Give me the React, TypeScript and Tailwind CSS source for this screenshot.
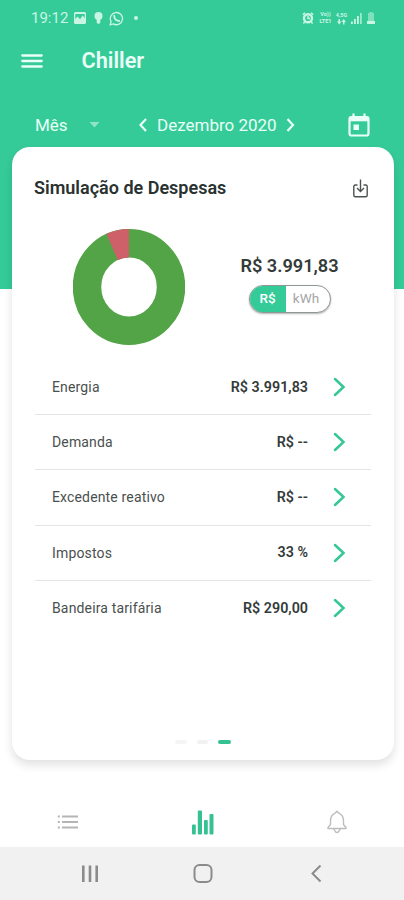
import React from 'react';

const rows = [
  { label: 'Energia', value: 'R$ 3.991,83' },
  { label: 'Demanda', value: 'R$ --' },
  { label: 'Excedente reativo', value: 'R$ --' },
  { label: 'Impostos', value: '33 %' },
  { label: 'Bandeira tarifária', value: 'R$ 290,00' },
];

function StatusBar() {
  return (
    <div className="flex h-9 items-center pl-[31px] pr-[29px] text-[#c9f5e4]">
      <span className="w-[37px] whitespace-nowrap text-[15px] leading-none">19:12</span>
      <svg className="ml-[6px]" width="12" height="12" viewBox="0 0 12 12">
        <path fill="currentColor" fillRule="evenodd" d="M1.5 0h9A1.5 1.5 0 0 1 12 1.500v9a1.500 1.500 0 0 1-1.500 1.500h-9A1.500 1.500 0 0 1 0 10.500v-9A1.500 1.500 0 0 1 1.500 0ZM1.300 2v5l2.300-2.500 2.500 2.700 2.500-3.700 2.100 2.500V2Z" />
      </svg>
      <svg className="ml-[8px]" width="9" height="12" viewBox="0 0 9 12" fill="currentColor">
        <circle cx="4.500" cy="4" r="4" />
        <path d="M2.700 7h3.600v3.500l-1 1.200H3.700l-1-1.200Z" />
      </svg>
      <svg className="ml-[6px]" width="15" height="15" viewBox="0 0 15 15" fill="none" stroke="currentColor">
        <path strokeWidth="1.300" d="m1.200 13.800.9-3.200a6.100 6.100 0 1 1 2.300 2.300Z" />
        <path strokeWidth="1.800" strokeLinecap="round" d="M5.200 4.700c0 3 2 5 5 5.300" />
      </svg>
      <span className="ml-[10px] h-1 w-1 rounded-full bg-current" />
      <div className="ml-auto flex items-center">
        <svg width="12" height="12" viewBox="0 0 12 12" fill="none" stroke="currentColor">
          <circle cx="6" cy="6.300" r="4" strokeWidth="2.400" />
          <path strokeWidth="1.500" d="M6 4v2.500h2M.8 2.800 3 .8M11.200 2.800 9 .8M2.600 10l-1.200 1.500M9.400 10l1.200 1.500" />
        </svg>
        <span className="ml-[4px] flex w-[15px] flex-col items-center text-[5.500px] font-bold leading-[7px]">
          <span>Vo))</span>
          <span>LTE1</span>
        </span>
        <span className="ml-[2px] flex w-[13px] flex-col items-center text-[5.500px] font-bold leading-[7px]">
          <span>4,5G</span>
          <svg width="9" height="6" viewBox="0 0 9 6" fill="currentColor">
            <path d="M1.500 0h1.500v2.500h1.500L2.200 5.500 0 2.500h1.500ZM6 5.500h1.500V3H9L6.700 0 4.500 3H6Z" />
          </svg>
        </span>
        <svg className="ml-[3px]" width="11" height="12" viewBox="0 0 11 12" fill="currentColor">
          <path d="M0 9.500h1.800V12H0ZM3 7h1.800v5H3ZM6 4h1.800v8H6Z" />
          <path d="M9 1h1.800v11H9Z" opacity=".7" />
        </svg>
        <svg className="ml-[5px]" width="8" height="12" viewBox="0 0 8 12" fill="currentColor">
          <path d="M2.500 0h3v1H7v8H1V1h1.500Z" opacity=".5" />
          <path d="M0 9h8v3H0Z" />
        </svg>
      </div>
    </div>
  );
}

function Header() {
  return (
    <header className="h-[289px] bg-[#35cb98] text-[#e9fff7]">
      <StatusBar />
      <div className="flex h-[50px] items-center pl-[21px]">
        <svg width="22" height="16" viewBox="0 0 22 16" stroke="currentColor" strokeWidth="2.300" strokeLinecap="round">
          <path d="M1.300 2.500h19.400M1.300 8h19.400M1.300 13.500h19.400" />
        </svg>
        <h1 className="ml-[38.500px] text-[21.700px] font-semibold leading-none">Chiller</h1>
      </div>
      <div className="mt-[18px] flex h-[42px] items-center pl-[35px] pr-[34px]">
        <span className="w-[33px] text-[17px] leading-none">Mês</span>
        <svg className="ml-[21px]" width="11" height="6" viewBox="0 0 11 6" fill="#8fe5c6">
          <path d="M.5 0h10l-5 5.500Z" />
        </svg>
        <svg className="ml-[38px]" width="9" height="14" viewBox="0 0 9 14" fill="none" stroke="currentColor" strokeWidth="2.200">
          <path d="M8 1 2.500 7 8 13" />
        </svg>
        <span className="ml-[10px] w-[121px] whitespace-nowrap text-[17px] leading-none">Dezembro 2020</span>
        <svg className="ml-[8px]" width="9" height="14" viewBox="0 0 9 14" fill="none" stroke="currentColor" strokeWidth="2.200">
          <path d="M1.500 1 7 7l-5.500 6" />
        </svg>
        <svg className="ml-auto" width="22" height="24" viewBox="0 0 22 24" fill="none" stroke="currentColor">
          <rect x="1.500" y="4" width="19" height="18.500" rx="2" strokeWidth="2.200" />
          <path d="M1 3.800h20v4.500H1Z" fill="currentColor" stroke="none" />
          <path strokeWidth="2.200" d="M5.500.5v5M16.500.5v5" />
          <path d="M5.500 11.500h5.500v5.500H5.500Z" fill="currentColor" stroke="none" />
        </svg>
      </div>
    </header>
  );
}

function Donut() {
  return (
    <svg width="112" height="118" viewBox="0 0 112 118" preserveAspectRatio="none">
      <ellipse cx="56" cy="59" rx="42" ry="43.700" fill="none" stroke="#52a447" strokeWidth="28.500" />
      <path d="M56 .9A55.500 58.200 0 0 0 33.500 5.800L44.800 32.300A28 29.500 0 0 1 56 29.500Z" fill="#cd6068" />
    </svg>
  );
}

function ExpenseRow({ label, value }: { label: string; value: string }) {
  return (
    <div className="flex h-[55.200px] items-center border-b border-[#e4e6e5] pl-[17px] pr-[25px] pt-px last:border-b-0">
      <span className="text-[14px] tracking-[0.150px] text-[#4a504e]">{label}</span>
      <span className="ml-auto text-[14.300px] font-semibold text-[#343b39]">{value}</span>
      <svg className="-mt-px ml-[25px]" width="13" height="20" viewBox="0 0 13 20" fill="none" stroke="#35c794" strokeWidth="2.500" strokeLinecap="round">
        <path d="m2 2 8.500 8L2 18" />
      </svg>
    </div>
  );
}

function TabBar() {
  return (
    <nav className="flex h-[50px] items-center pl-[57px] pr-[57px]">
      <svg width="22" height="16" viewBox="0 0 22 16" fill="none" stroke="#b5b5b5" strokeWidth="2">
        <path d="M.8 2.500h2M5 2.500h16M.8 8h2M5 8h16M.8 13.500h2M5 13.500h16" />
      </svg>
      <svg className="ml-[113px]" width="22" height="25" viewBox="0 0 22 25" fill="#35c192">
        <rect x="0" y="14.500" width="3.800" height="10" rx="1" />
        <rect x="5.800" y="0.500" width="4.200" height="24" rx="1" />
        <rect x="12" y="10" width="3.800" height="14.500" rx="1" />
        <rect x="17.500" y="4" width="4" height="20.500" rx="1" />
      </svg>
      <svg className="ml-auto" width="20" height="24" viewBox="0 0 20 24" fill="none" stroke="#bdbdbd" strokeWidth="1.400" strokeLinejoin="round">
        <path d="M10 1.200 8.500 2.800C5 4.300 3.500 7 3.500 10.500v4L1 17.500v1h18v-1l-2.500-3v-4c0-3.500-1.500-6.200-5-7.700Z" />
        <path d="M6 18.500c1 .2 1.500 1.300 2 2.500.8 2 3.200 2 4 0 .5-1.200 1-2.300 2-2.500" />
      </svg>
    </nav>
  );
}

function SystemNav() {
  return (
    <div className="flex h-[53px] items-center bg-[#f1f1f1] pl-[81px] pr-[81px] text-[#8b8b8b]">
      <svg width="18" height="18" viewBox="0 0 18 18" stroke="currentColor" strokeWidth="2.600">
        <path d="M2.300 .5v16.500M9 .5v16.500M15.700 .5v16.500" />
      </svg>
      <svg className="ml-[94px]" width="20" height="20" viewBox="0 0 20 20" fill="none" stroke="currentColor" strokeWidth="2">
        <rect x="1.500" y="1" width="17" height="17" rx="5" />
      </svg>
      <svg className="ml-auto" width="14" height="18" viewBox="0 0 14 18" fill="none" stroke="currentColor" strokeWidth="2">
        <path d="M11.500.5 3.500 8.500l8 8" />
      </svg>
    </div>
  );
}

export default function App() {
  return (
    <div className="flex h-[900px] w-full flex-col overflow-hidden bg-white font-['Roboto',sans-serif]">
      <Header />

      {/* Expenses card */}
      <main className="z-10 -mt-[142px] ml-[12px] mr-[10px] flex h-[613px] flex-col rounded-[18px] bg-white shadow-[0_5px_10px_rgba(0,0,0,0.12)]">
        <div className="flex h-[82px] items-center justify-between pl-[22px] pr-[26px]">
          <h2 className="whitespace-nowrap text-[18px] font-semibold leading-none text-[#293230]">Simulação de Despesas</h2>
          <svg width="15" height="19" viewBox="0 0 15 19" fill="none" stroke="#4b5350" strokeWidth="1.400">
            <path d="M4.500 6H2.300Q.8 6 .8 7.500v8.700q0 1.500 1.500 1.500h10.400q1.500 0 1.500-1.500V7.500Q14.200 6 12.700 6h-2.200M7.500.5V12M4 9l3.500 3.500L11 9" />
          </svg>
        </div>
        <div className="flex h-[131px] pl-[61px]">
          <div className="-mt-px">
            <Donut />
          </div>
          <div className="ml-[44px] flex w-[121px] flex-col items-center pt-[27px]">
            <span className="whitespace-nowrap text-[18.200px] font-semibold leading-[20px] text-[#343b39]">R$ 3.991,83</span>
            <div className="mt-[9px] flex h-[28px] w-[82px] overflow-hidden rounded-full border-[1.500px] border-[#8f9994] bg-white text-[13.500px] leading-[24px] shadow-[0_1px_2px_rgba(0,0,0,0.3)]">
              <span className="w-[36px] bg-[#35cb98] text-center font-medium text-white">R$</span>
              <span className="flex-1 pr-[3px] text-center text-[#a5a5a5]">kWh</span>
            </div>
          </div>
        </div>
        <div className="mx-[23px]">
          {rows.map((row) => (
            <ExpenseRow key={row.label} label={row.label} value={row.value} />
          ))}
        </div>
        <div className="mb-[16px] ml-[163px] mt-auto flex items-center gap-[10px]">
          <span className="h-[4px] w-[12px] rounded-full bg-[#f5f5f5]" />
          <span className="h-[4px] w-[11px] rounded-full bg-[#f1f1f1]" />
          <span className="h-[4px] w-[13px] rounded-full bg-[#35c192]" />
        </div>
      </main>

      <div className="mt-auto">
        <TabBar />
        <SystemNav />
      </div>
    </div>
  );
}
